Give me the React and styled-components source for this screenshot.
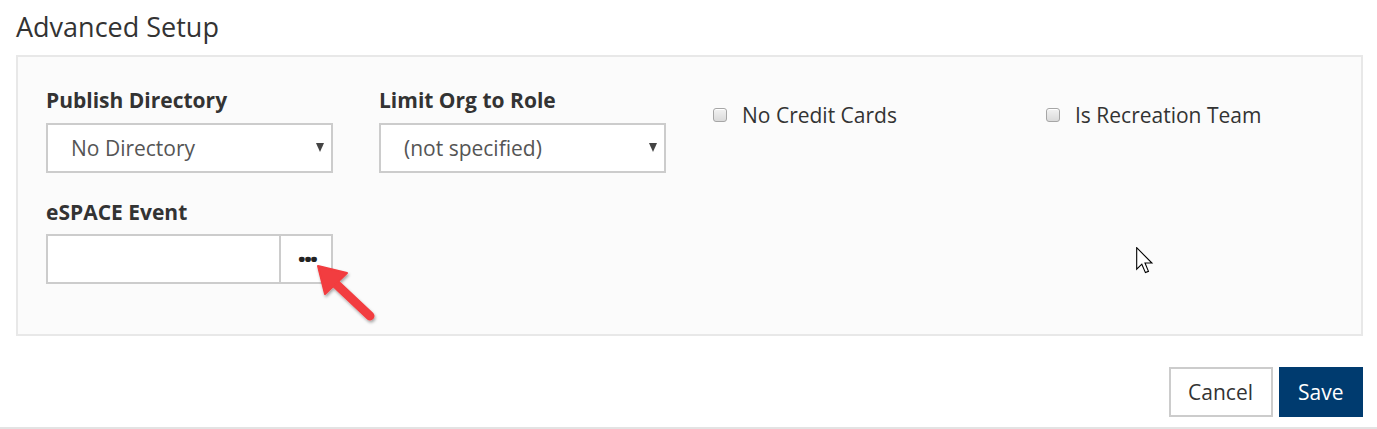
import React from "react";
import styled, { createGlobalStyle } from "styled-components";

const Global = createGlobalStyle`
  html, body { margin: 0; padding: 0; background: #ffffff; }
  body { font-family: "Open Sans", "Liberation Sans", sans-serif; color: #333; }
  * { box-sizing: border-box; }
`;

const Page = styled.div`
  width: 1377px;
  height: 429px;
  padding: 12px 14px 0 16px;
  border-bottom: 2px solid #e3e3e3;
  display: flex;
  flex-direction: column;
`;

const Title = styled.h2`
  margin: 0;
  font-size: 27px;
  font-weight: 400;
  line-height: 30px;
  color: #333;
`;

const Panel = styled.div`
  position: relative;
  margin-top: 13px;
  background: #fbfbfb;
  border: 2px solid #e8e8e8;
  padding: 31px 28px 50px 28px;
`;

const Grid = styled.div`
  display: grid;
  grid-template-columns: repeat(4, 287px);
  column-gap: 46px;
  row-gap: 27px;
`;

const Field = styled.div`
  display: flex;
  flex-direction: column;
`;

const Label = styled.label`
  font-size: 21px;
  font-weight: 700;
  line-height: 24px;
  color: #333;
  margin-bottom: ${p => p.$gap || 11}px;
`;

const SelectWrap = styled.div`
  position: relative;
  height: 50px;
  &::after {
    content: "";
    position: absolute;
    right: 9px;
    top: 20px;
    border-left: 4.5px solid transparent;
    border-right: 4.5px solid transparent;
    border-top: 9px solid #444;
    pointer-events: none;
  }
`;

const Select = styled.select`
  appearance: none;
  -webkit-appearance: none;
  width: 100%;
  height: 50px;
  border: 2px solid #cccccc;
  border-radius: 0;
  background: #fff;
  padding: 0 30px 0 23px;
  font-family: "Open Sans", "Liberation Sans", sans-serif;
  font-size: 21px;
  color: #555;
  outline: none;
`;

const CheckField = styled.label`
  display: flex;
  align-items: center;
  gap: 15px;
  margin-top: 12px;
  height: 30px;
  padding-left: 1px;
  font-size: 21px;
  color: #333;
  align-self: start;
`;

const Check = styled.input`
  appearance: none;
  -webkit-appearance: none;
  margin: 0;
  width: 14px;
  height: 14px;
  border: 1px solid #a6a6a6;
  border-radius: 3px;
  background: linear-gradient(#f2f2f2, #dadada);
  box-shadow: inset 0 1px 0 #fff;
`;

const InputGroup = styled.div`
  position: relative;
  display: flex;
  height: 50px;
`;

const TextInput = styled.input`
  flex: 1;
  min-width: 0;
  height: 50px;
  border: 2px solid #cccccc;
  border-right: none;
  border-radius: 0;
  background: #fff;
  outline: none;
  font-family: "Open Sans", "Liberation Sans", sans-serif;
  font-size: 21px;
  padding: 0 12px;
`;

const DotsButton = styled.button`
  width: 54px;
  height: 50px;
  border: 2px solid #cccccc;
  background: #fff;
  border-radius: 0;
  font-family: "Open Sans", "Liberation Sans", sans-serif;
  font-size: 28px;
  font-weight: 800;
  letter-spacing: -2px;
  color: #222;
  padding: 0 0 16px 2px;
  line-height: 1;
`;

const Arrow = styled.svg`
  position: absolute;
  left: 266px;
  top: 26px;
  overflow: visible;
  pointer-events: none;
`;

const Cursor = styled.svg`
  position: absolute;
  left: 1118px;
  top: 190px;
  pointer-events: none;
`;

const Actions = styled.div`
  display: flex;
  justify-content: flex-end;
  gap: 6px;
  margin-top: 31px;
`;

const Button = styled.button`
  height: 50px;
  padding: 0 17.5px;
  border: 2px solid ${p => (p.$primary ? "#003b6f" : "#cccccc")};
  background: ${p => (p.$primary ? "#003b6f" : "#fff")};
  color: ${p => (p.$primary ? "#fff" : "#333")};
  font-family: "Open Sans", "Liberation Sans", sans-serif;
  font-size: 21px;
  border-radius: 0;
`;

export default function App() {
  return (
    <>
      <Global />
      <Page>
        <Title>Advanced Setup</Title>
        <Panel>
          <Grid>
            <Field>
              <Label>Publish Directory</Label>
              <SelectWrap>
                <Select defaultValue="none">
                  <option value="none">No Directory</option>
                </Select>
              </SelectWrap>
            </Field>
            <Field>
              <Label>Limit Org to Role</Label>
              <SelectWrap>
                <Select defaultValue="ns">
                  <option value="ns">(not specified)</option>
                </Select>
              </SelectWrap>
            </Field>
            <CheckField>
              <Check type="checkbox" />
              No Credit Cards
            </CheckField>
            <CheckField>
              <Check type="checkbox" />
              Is Recreation Team
            </CheckField>
            <Field>
              <Label $gap={10}>eSPACE Event</Label>
              <InputGroup>
                <TextInput type="text" />
                <DotsButton>...</DotsButton>
                <Arrow width="70" height="70" viewBox="0 0 70 70">
                  <defs>
                    <filter id="sh" x="-30%" y="-30%" width="160%" height="160%">
                      <feDropShadow dx="1" dy="2" stdDeviation="1.5" floodColor="#000" floodOpacity="0.35" />
                    </filter>
                  </defs>
                  <g filter="url(#sh)" fill="#f23c3f" stroke="#f23c3f">
                    <line x1="24" y1="24" x2="58" y2="56" strokeWidth="9" strokeLinecap="round" />
                    <polygon points="6,6 35,13 13,34" strokeWidth="2" strokeLinejoin="round" />
                  </g>
                </Arrow>
              </InputGroup>
            </Field>
          </Grid>
          <Cursor width="18" height="27" viewBox="0 0 13 19.5">
            <path
              d="M0.5 0.5 L0.5 16 L4.2 12.4 L6.8 18.5 L9 17.6 L6.5 11.6 L11.5 11.6 Z"
              fill="#fff"
              stroke="#000"
              strokeWidth="0.8"
              strokeLinejoin="miter"
            />
          </Cursor>
        </Panel>
        <Actions>
          <Button>Cancel</Button>
          <Button $primary>Save</Button>
        </Actions>
      </Page>
    </>
  );
}
